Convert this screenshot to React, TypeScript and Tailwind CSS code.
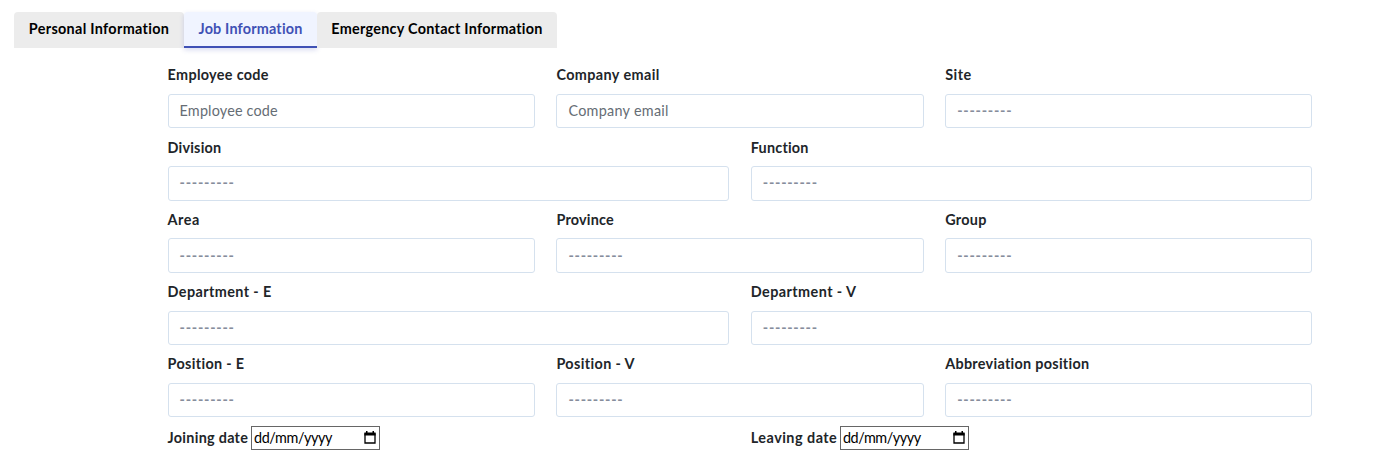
type FieldSpec = { label: string; placeholder?: string; labelSpacing: string; valueSpacing?: string };

const rows: FieldSpec[][] = [
  [
    { label: "Employee code", placeholder: "Employee code", labelSpacing: "tracking-[0.32px]", valueSpacing: "tracking-[0.17px]" },
    { label: "Company email", placeholder: "Company email", labelSpacing: "tracking-[0.4px]", valueSpacing: "tracking-[0.28px]" },
    { label: "Site", labelSpacing: "tracking-[0.5px]" },
  ],
  [
    { label: "Division", labelSpacing: "tracking-[0.2px]" },
    { label: "Function", labelSpacing: "tracking-[0.2px]" },
  ],
  [
    { label: "Area", labelSpacing: "tracking-[0.5px]" },
    { label: "Province", labelSpacing: "tracking-[0.2px]" },
    { label: "Group", labelSpacing: "tracking-[0.3px]" },
  ],
  [
    { label: "Department - E", labelSpacing: "tracking-[0.4px]" },
    { label: "Department - V", labelSpacing: "tracking-[0.43px]" },
  ],
  [
    { label: "Position - E", labelSpacing: "tracking-[0.33px]" },
    { label: "Position - V", labelSpacing: "tracking-[0.38px]" },
    { label: "Abbreviation position", labelSpacing: "tracking-[0.29px]" },
  ],
];

function Field({ label, placeholder, labelSpacing, valueSpacing = "tracking-normal" }: FieldSpec) {
  return (
    <div className="flex flex-col">
      <label className={`mb-2 h-[21.6px] font-bold leading-[22.4px] ${labelSpacing}`}>{label}</label>
      <div className="flex h-[34.4px] items-center rounded-[3px] border border-[#d5e1ee] bg-white px-[11px] leading-5">
        {placeholder ? (
          <span className={`text-[#666d75] ${valueSpacing}`}>{placeholder}</span>
        ) : (
          <span className="font-bold tracking-[0.75px] text-[#868d9c]">---------</span>
        )}
      </div>
    </div>
  );
}

function DateField({ label, labelClass }: { label: string; labelClass: string }) {
  return (
    <div className="flex items-center">
      <label className={`whitespace-nowrap font-bold ${labelClass}`}>{label}</label>
      <div className="flex h-6 w-[129px] items-center justify-between border border-[#666] bg-white pl-0.5 pr-[3px] text-black">
        <span className="tracking-[-0.42px]">dd/mm/yyyy</span>
        <svg width="12" height="13" viewBox="0 0 12 13" fill="none">
          <path d="M1 3h10v9H1z" stroke="currentColor" strokeWidth="1.3" />
          <path d="M.4 1.500h11.200v3H.4zM2 0h1.500v2H2zM8.500 0H10v2H8.500z" fill="currentColor" />
        </svg>
      </div>
    </div>
  );
}

export default function App() {
  return (
    <main className="min-h-[476px] bg-white pt-3 font-['Lato',sans-serif] text-[14.4px] text-[#212529]">
      <nav className="ml-3.5 flex h-9 font-bold leading-[21.6px] text-black">
        <button className="w-[170px] rounded-t-[4px] bg-[#ececec] pb-0.5 tracking-[0.31px]">Personal Information</button>
        <button className="w-[133px] rounded-t-[4px] border-b-2 border-[#3f51b5] bg-[#f0f4ff] tracking-[0.18px] text-[#3f51b5] shadow-[0_2px_5px_rgba(63,81,181,0.2)]">
          Job Information
        </button>
        <button className="w-60 rounded-t-[4px] bg-[#ececec] pb-0.5 tracking-[0.27px]">Emergency Contact Information</button>
      </nav>
      <form className="ml-[167.6px] mt-[16.4px] flex w-[1144.8px] flex-col gap-[8.22px]">
        {rows.map((row, i) => (
          <div key={i} className="grid auto-cols-fr grid-flow-col gap-[21.6px]">
            {row.map((f) => (
              <Field key={f.label} {...f} />
            ))}
          </div>
        ))}
        <div className="mt-[0.4px] grid grid-cols-2 gap-[21.6px]">
          <DateField label="Joining date" labelClass="w-[83.5px] tracking-[0.28px]" />
          <DateField label="Leaving date" labelClass="w-[89.2px] tracking-[0.48px]" />
        </div>
      </form>
    </main>
  );
}
